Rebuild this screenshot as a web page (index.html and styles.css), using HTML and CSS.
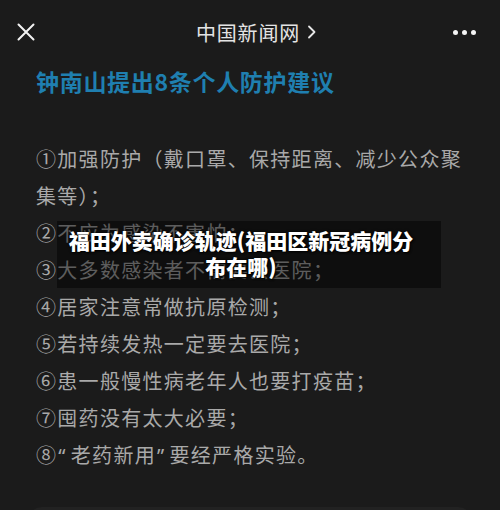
FILE: index.html
```html
<!DOCTYPE html>
<html lang="zh-CN">
<head>
  <meta charset="UTF-8" />
  <meta name="viewport" content="width=device-width, initial-scale=1.0" />
  <title>福田外卖确诊轨迹</title>
  <link rel="stylesheet" href="styles.css">
</head>
<body>
  <main class="screen">
    <header class="topbar">
      <button class="icon-btn" aria-label="关闭">
        <svg width="18" height="18" viewBox="0 0 18 18" fill="none">
          <path d="M1.5 1.5l15 15M16.5 1.5l-15 15" stroke="#f2f2f2" stroke-width="2" stroke-linecap="round"/>
        </svg>
      </button>
      <div class="source">中国新闻网
        <svg width="10" height="14" viewBox="0 0 10 14" fill="none">
          <path d="M2 1.5l5.5 5.5L2 12.5" stroke="#e6e6e6" stroke-width="1.8" stroke-linecap="round" stroke-linejoin="round"/>
        </svg>
      </div>
      <button class="icon-btn more" aria-label="更多">
        <span></span><span></span><span></span>
      </button>
    </header>

    <h1>钟南山提出8条个人防护建议</h1>

    <ul class="tips">
      <li>①加强防护（戴口罩、保持距离、减少公众聚集等）；</li>
      <li>②不应为感染不害怕；</li>
      <li>③大多数感染者不需要去医院；</li>
      <li>④居家注意常做抗原检测；</li>
      <li>⑤若持续发热一定要去医院；</li>
      <li>⑥患一般慢性病老年人也要打疫苗；</li>
      <li>⑦囤药没有太大必要；</li>
      <li>⑧<span class="quote">“</span>老药新用<span class="quote">”</span>要经严格实验。</li>
    </ul>

    <div class="sheet"></div>

    <div class="caption">福田外卖确诊轨迹(福田区新冠病例分布在哪)</div>
  </main>
</body>
</html>
```

FILE: styles.css
```css
body {
  margin: 0;
  background: #1b1b1b;
  font-family: "Noto Sans CJK SC", "Noto Sans", sans-serif;
  color: #a9a9a9;
  overflow: hidden;
}

.screen {
  position: relative;
  height: 510px;
  overflow: hidden;
}

.topbar {
  height: 64px;
  display: flex;
  align-items: center;
  justify-content: space-between;
  padding: 0 16px 0 16px;
}

.icon-btn {
  background: none;
  border: none;
  padding: 0;
  width: 20px;
  height: 20px;
  display: flex;
  align-items: center;
  justify-content: center;
  cursor: pointer;
}

.more {
  width: 30px;
  gap: 4px;
  margin-right: 5px;
}

.more span {
  width: 5px;
  height: 5px;
  border-radius: 50%;
  background: #f5f5f5;
}

.source {
  display: flex;
  align-items: center;
  gap: 7px;
  font-size: 20px;
  letter-spacing: 0.8px;
  color: #e4e4e4;
  margin-left: 28px;
}

h1 {
  margin: 2px 36px 0;
  font-size: 23px;
  line-height: 30px;
  font-weight: 700;
  color: #1f7fb0;
  letter-spacing: 0.7px;
}

.tips {
  list-style: none;
  margin: 44px 0 0;
  padding: 0 34px 0 36px;
  font-size: 20px;
  line-height: 37px;
  letter-spacing: 1.3px;
}

.quote {
  font-family: "Noto Sans", sans-serif;
  padding: 0 4px 0 1px;
}

.sheet {
  margin: 33px 28px 0;
  height: 40px;
  border-radius: 14px 14px 0 0;
  background: #222222;
}

.caption {
  position: absolute;
  left: 57px;
  top: 221px;
  width: 384px;
  height: 67px;
  box-sizing: border-box;
  padding: 6px 22px 0 6px;
  background: rgba(0, 0, 0, 0.45);
  color: #ffffff;
  font-size: 21px;
  font-weight: 900;
  line-height: 26px;
  text-align: center;
  text-shadow: 0 0 3px rgba(0, 0, 0, 0.9), 1px 1px 2px #000;
}
```
